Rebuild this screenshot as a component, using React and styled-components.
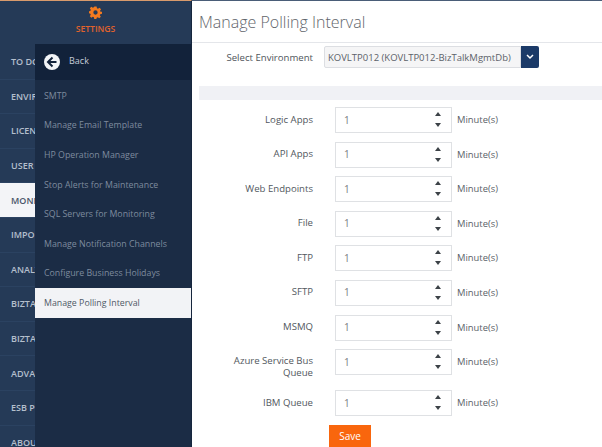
import React from "react";
import styled, { createGlobalStyle } from "styled-components";

const GlobalStyle = createGlobalStyle`
  html, body {
    margin: 0;
    padding: 0;
    height: 100%;
    overflow: hidden;
    background: #fff;
    font-family: "Open Sans", "Liberation Sans", sans-serif;
  }
`;

const Page = styled.div`
  position: relative;
  display: grid;
  grid-template-columns: 192px 1fr;
  width: 602px;
  height: 447px;
  overflow: hidden;
`;

const Sidebar = styled.aside`
  position: relative;
  background: #253a57;
  border-top: 1px solid #d99a6c;
  border-right: 1px solid #16263d;
  box-sizing: border-box;
  overflow: hidden;
`;

const Brand = styled.div`
  height: 44px;
  padding-top: 5px;
  box-sizing: border-box;
  display: flex;
  flex-direction: column;
  align-items: center;
  gap: 4px;
  color: #e0622c;
  font-size: 8.6px;
  font-weight: 600;
  line-height: 12px;
`;

const SideItem = styled.div`
  height: 34.6px;
  flex: none;
  box-sizing: border-box;
  padding-left: 11px;
  display: flex;
  align-items: center;
  overflow: hidden;
  font-size: 9px;
  font-weight: 600;
  white-space: nowrap;
  color: ${(p) => (p.$active ? "#4a5568" : "#b4bfcd")};
  background: ${(p) => (p.$active ? "#f3f4f7" : "transparent")};
  border-bottom: 1px solid #2b4261;
`;

const SideList = styled.div`
  display: flex;
  flex-direction: column;
  width: 35px;
`;

const SubMenu = styled.nav`
  position: absolute;
  top: 43px;
  left: 35px;
  width: 156px;
  bottom: 0;
  background: #1b2c45;
`;

const BackRow = styled.div`
  height: 36px;
  display: flex;
  align-items: center;
  gap: 9px;
  padding-left: 9px;
  background: #12223a;
  color: #c4ccd8;
  font-size: 9px;
  font-weight: 500;
`;

const BackLabel = styled.span`
  padding-bottom: 3px;
`;

const SubList = styled.div`
  display: flex;
  flex-direction: column;
  padding-top: 1px;
`;

const SubItem = styled.div`
  height: 29.6px;
  padding-left: 9px;
  display: flex;
  align-items: center;
  font-size: 8.8px;
  white-space: nowrap;
  color: ${(p) => (p.$active ? "#4f5966" : "#7e8b9e")};
  background: ${(p) => (p.$active ? "#f2f3f6" : "transparent")};
`;

const Main = styled.main`
  display: flex;
  flex-direction: column;
  min-width: 0;
  border-top: 1px solid #4a5d78;
  box-sizing: border-box;
`;

const TitleBar = styled.header`
  height: 42px;
  flex: none;
  padding-left: 7px;
  display: flex;
  align-items: center;
  font-size: 16px;
  font-weight: 300;
  color: #5f656b;
  border-bottom: 1px solid #e4e6ea;
  box-sizing: border-box;
`;

const Content = styled.div`
  flex: 1;
  display: flex;
  flex-direction: column;
  margin-left: 7px;
  background: #f0f1f5;
  min-height: 0;
`;

const EnvPanel = styled.section`
  height: 43px;
  flex: none;
  background: #fff;
  display: flex;
  align-items: flex-start;
  padding-top: 3px;
  box-sizing: border-box;
`;

const EnvLabel = styled.label`
  width: 114px;
  flex: none;
  height: 22px;
  display: flex;
  align-items: center;
  justify-content: flex-end;
  font-size: 9.6px;
  font-weight: 500;
  color: #4f555b;
`;

const Select = styled.div`
  margin-left: 11px;
  width: 197px;
  height: 22px;
  box-sizing: border-box;
  padding-left: 3px;
  display: flex;
  align-items: center;
  background: #f5f5f6;
  border: 1px solid #dcdee2;
  border-radius: 2px 0 0 2px;
  font-size: 9.5px;
  font-weight: 500;
  color: #5c6269;
  white-space: nowrap;
`;

const SelectButton = styled.div`
  width: 18px;
  height: 22px;
  display: flex;
  align-items: center;
  justify-content: center;
  background: #1b3a68;
  border-radius: 0 2px 2px 0;
`;

const FormPanel = styled.section`
  margin-top: 14px;
  flex: 1;
  background: #fff;
  padding-top: 7px;
  display: flex;
  flex-direction: column;
`;

const Row = styled.div`
  display: flex;
  align-items: center;
  margin-bottom: ${(p) => (p.$tall ? "15px" : "8.6px")};
  height: 26px;
`;

const RowLabel = styled.label`
  width: 114px;
  box-sizing: border-box;
  padding-left: 20px;
  padding-bottom: 1px;
  margin-top: ${(p) => (p.$tall ? "10px" : "0")};
  flex: none;
  text-align: right;
  font-size: 9.6px;
  font-weight: 500;
  line-height: 12px;
  color: #52585e;
`;

const Spinner = styled.div`
  margin-left: 22px;
  width: 117px;
  height: 26px;
  box-sizing: border-box;
  padding: 0 10px 1px 8px;
  display: flex;
  align-items: center;
  justify-content: space-between;
  border: 1px solid #dfe1e4;
  font-size: 10px;
  color: #777c82;
`;

const Arrows = styled.div`
  display: flex;
  flex-direction: column;
  gap: 7px;
`;

const Unit = styled.span`
  margin-left: 5px;
  padding-bottom: 1px;
  font-size: 9.4px;
  font-weight: 500;
  color: #5b6167;
`;

const SaveButton = styled.button`
  margin-left: 130px;
  width: 42px;
  height: 22px;
  flex: none;
  border: none;
  padding: 0;
  background: #f9660d;
  color: #fff;
  font-family: inherit;
  font-size: 10px;
  font-weight: 400;
`;

const sideItems = ["TO DO", "ENVIRONMENT", "LICENSE", "USER", "MONITORING", "IMPORT", "ANALYTICS", "BIZTALK", "BIZTALK", "ADVANCED", "ESB PORTAL", "ABOUT"];

const subItems = [
  "SMTP",
  "Manage Email Template",
  "HP Operation Manager",
  "Stop Alerts for Maintenance",
  "SQL Servers for Monitoring",
  "Manage Notification Channels",
  "Configure Business Holidays",
  "Manage Polling Interval",
];

const fields = ["Logic Apps", "API Apps", "Web Endpoints", "File", "FTP", "SFTP", "MSMQ", "Azure Service Bus Queue", "IBM Queue"];

function GearIcon() {
  return (
    <svg width="13" height="13" viewBox="0 0 24 24" fill="#f47a1f">
      <path
        fillRule="evenodd"
        d="M10 1h4l.7 3.2 1.9.8L19.4 3.2l2.8 2.8-1.8 2.8.8 1.9L24 10.4v3.9l-3.2.7-.8 1.9 1.8 2.8-2.8 2.8-2.8-1.8-1.9.8L13.6 24h-3.9l-.7-3.2-1.9-.8-2.8 1.8-2.8-2.8L3.3 16l-.8-1.9L0 13.6V9.7l2.5-.7.8-1.9-1.8-2.8 2.8-2.8L7 3.3l1.9-.8zM12 8a4 4 0 1 0 0 8 4 4 0 0 0 0-8z"
      />
    </svg>
  );
}

function BackIcon() {
  return (
    <svg width="16" height="16" viewBox="0 0 16 16">
      <circle cx="8" cy="8" r="8" fill="#f2f4f7" />
      <path d="M8.5 3.5 4 8l4.5 4.5M4.5 8H12.5" fill="none" stroke="#12223a" strokeWidth="2" />
    </svg>
  );
}

function Arrow({ down }) {
  return (
    <svg width="6" height="4" viewBox="0 0 6 4">
      <path d={down ? "M0 0h6L3 4z" : "M0 4h6L3 0z"} fill="#3c4247" />
    </svg>
  );
}

export default function App() {
  return (
    <>
      <GlobalStyle />
      <Page>
        <Sidebar>
          <Brand>
            <GearIcon />
            SETTINGS
          </Brand>
          <SideList>
            {sideItems.map((item, i) => (
              <SideItem key={i} $active={item === "MONITORING"}>
                {item}
              </SideItem>
            ))}
          </SideList>
          <SubMenu>
            <BackRow>
              <BackIcon />
              <BackLabel>Back</BackLabel>
            </BackRow>
            <SubList>
              {subItems.map((item) => (
                <SubItem key={item} $active={item === "Manage Polling Interval"}>
                  {item}
                </SubItem>
              ))}
            </SubList>
          </SubMenu>
        </Sidebar>
        <Main>
          <TitleBar>Manage Polling Interval</TitleBar>
          <Content>
            <EnvPanel>
              <EnvLabel>Select Environment</EnvLabel>
              <Select>KOVLTP012 (KOVLTP012-BizTalkMgmtDb)</Select>
              <SelectButton>
                <svg width="8" height="6" viewBox="0 0 8 6">
                  <path d="M1 1l3 3 3-3" fill="none" stroke="#fff" strokeWidth="1.5" />
                </svg>
              </SelectButton>
            </EnvPanel>
            <FormPanel>
              {fields.map((field) => {
                const tall = field.startsWith("Azure");
                return (
                  <Row key={field} $tall={tall}>
                    <RowLabel $tall={tall}>{field}</RowLabel>
                    <Spinner>
                      1
                      <Arrows>
                        <Arrow />
                        <Arrow down />
                      </Arrows>
                    </Spinner>
                    <Unit>Minute(s)</Unit>
                  </Row>
                );
              })}
              <SaveButton>Save</SaveButton>
            </FormPanel>
          </Content>
        </Main>
      </Page>
    </>
  );
}
